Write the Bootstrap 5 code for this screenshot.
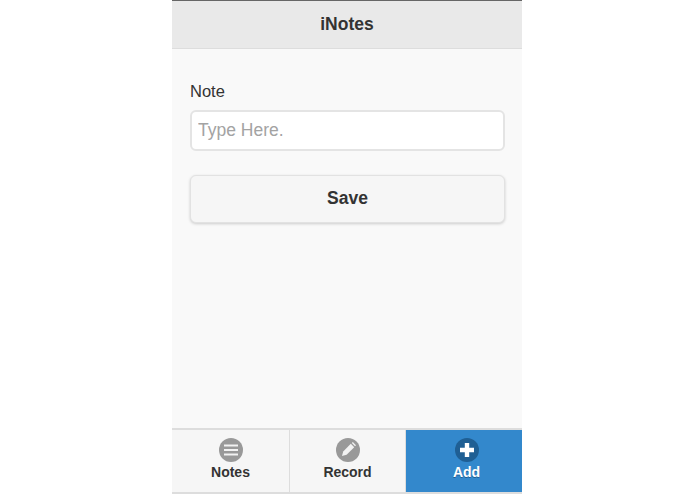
<!DOCTYPE html>
<html lang="en">
<head>
<meta charset="utf-8">
<title>iNotes</title>
<link href="https://cdn.jsdelivr.net/npm/bootstrap@5.3.0/dist/css/bootstrap.min.css" rel="stylesheet">
<style>
html,body{height:100%;background:#fff;margin:0;overflow:hidden}
body{font-family:"Liberation Sans",Arial,sans-serif;color:#333}
.phone{width:350px;height:494px;margin-left:172px;background:#f9f9f9}
.topbar{height:49px;background:#e9e9e9;border-top:1px solid #666;border-bottom:1px solid #ddd;color:#333;font-size:17.5px;font-weight:700}
.content{padding:31px 17px 0 18px}
.note-label{font-size:16.5px;line-height:22px;margin:0 0 8px;color:#333}
.note-input.form-control{height:41px;border:2px solid #e4e4e4;border-radius:6px;padding:0 6px;font-size:17.5px;color:#333;background:#fff;box-shadow:none}
.note-input::placeholder{color:#a3a3a3;opacity:1}
.save-btn.btn{height:48px;margin-top:24px;padding:0 12px 2px;background:#f6f6f6;border:1px solid #e2e2e2;border-radius:6px;font-size:17.5px;font-weight:700;color:#333;box-shadow:0 1px 3px rgba(0,0,0,.18)}
.tabbar{height:66px;border-top:2px solid #ddd;border-bottom:2px solid #ddd;background:#f6f6f6}
.tab-item{font-size:14px;font-weight:700;color:#333;line-height:16px;text-decoration:none;padding-top:8px;border-right:1px solid #ddd}
.tab-a{width:118px}.tab-b{width:116px}
.tab-c{flex:1;background:#3388cc;color:#fff;border-right:0;padding-left:5px;text-shadow:0 1px 0 #1f5f94}
.tab-item svg{display:block;margin-bottom:2px}
</style>
</head>
<body>
<div class="phone d-flex flex-column">
  <header class="topbar d-flex align-items-center justify-content-center">iNotes</header>
  <main class="content flex-grow-1">
    <label class="note-label d-block" for="note">Note</label>
    <input id="note" class="note-input form-control" type="text" placeholder="Type Here.">
    <button class="save-btn btn w-100 d-block" type="button">Save</button>
  </main>
  <nav class="tabbar d-flex">
    <a class="tab-item tab-a d-flex flex-column align-items-center" href="#">
      <svg width="24" height="24" viewBox="0 0 24 24"><circle cx="12" cy="12" r="12" fill="#999"/><path d="M5 7.5h14M5 12h14M5 16.5h14" stroke="#f2f2f2" stroke-width="2.2" fill="none"/></svg>
      Notes
    </a>
    <a class="tab-item tab-b d-flex flex-column align-items-center" href="#">
      <svg width="24" height="24" viewBox="0 0 24 24"><circle cx="12" cy="12" r="12" fill="#999"/><path d="M6 18l1.2-4.6 7.6-7.6 3.4 3.4-7.6 7.6z" fill="#f2f2f2"/><path d="M15.8 5l1-1 3.2 3.2-1 1z" fill="#f2f2f2"/></svg>
      Record
    </a>
    <a class="tab-item tab-c d-flex flex-column align-items-center" href="#">
      <svg width="24" height="24" viewBox="0 0 24 24"><circle cx="12" cy="12" r="12" fill="#1f5f94"/><path d="M12 5v14M5 12h14" stroke="#fff" stroke-width="4.4" fill="none"/></svg>
      Add
    </a>
  </nav>
</div>
<script src="https://cdn.jsdelivr.net/npm/bootstrap@5.3.0/dist/js/bootstrap.bundle.min.js"></script>
</body>
</html>
